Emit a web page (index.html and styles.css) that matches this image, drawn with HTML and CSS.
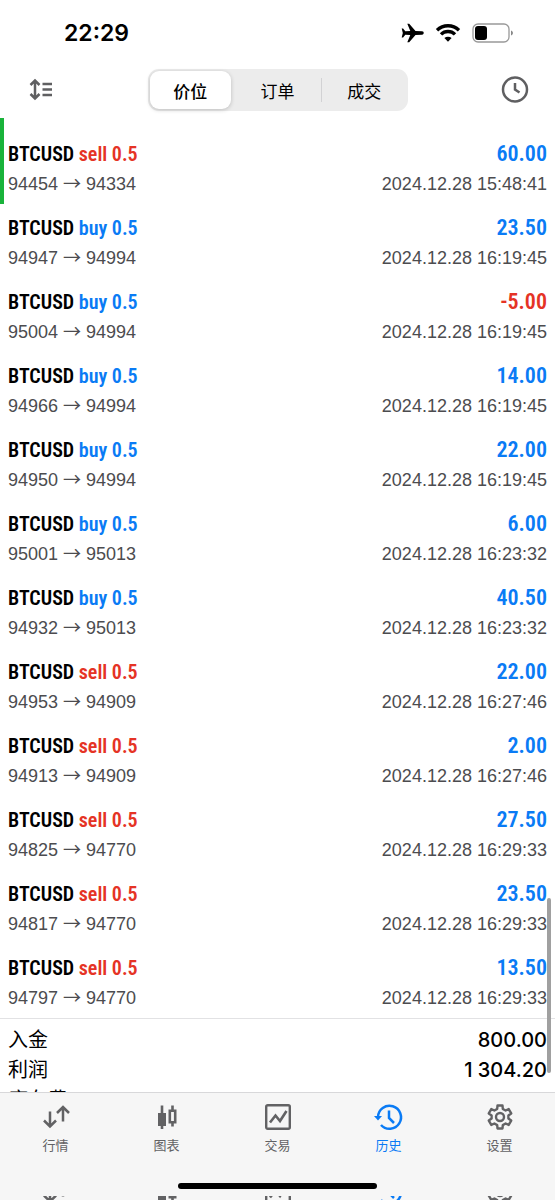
FILE: index.html
```
<!DOCTYPE html>
<html lang="zh-CN">
<head>
    <meta charset="UTF-8">
    <meta name="viewport" content="width=device-width, initial-scale=1.0">
    <title>历史</title>
    <link rel="stylesheet" href="styles.css">
</head>
<body>
    <!-- Shared icons -->
    <svg class="sprite" aria-hidden="true">
        <symbol id="icon-quotes" viewBox="0 0 30 30">
            <path d="M9 9.500v15M3 18.500l6 6 6-6M22 19.500V5M16 11l6-6 6 6" fill="none" stroke="currentColor" stroke-width="2.500"/>
        </symbol>
        <symbol id="icon-chart" viewBox="0 0 30 30">
            <path d="M10 3.500v23.500M20.500 3.500v5M20.500 20v4.500" fill="none" stroke="currentColor" stroke-width="2.600"/>
            <path d="M6 11h8v13H6z" fill="currentColor"/>
            <path d="M17.800 8.700h5.400v11.600h-5.400z" fill="none" stroke="currentColor" stroke-width="2.600"/>
        </symbol>
        <symbol id="icon-trade" viewBox="0 0 30 30">
            <rect x="3.200" y="3.200" width="23.600" height="23.600" rx="1.500" fill="none" stroke="currentColor" stroke-width="2.400"/>
            <path d="M7 20.500l5.500-7 4.500 5.500 6.500-10" fill="none" stroke="currentColor" stroke-width="2.600"/>
        </symbol>
        <symbol id="icon-history" viewBox="0 0 30 30">
            <path d="M4 15A11.500 11.500 0 1 1 7 23" fill="none" stroke="currentColor" stroke-width="2.500"/>
            <path d="M0 14h8l-4 4.500z" fill="currentColor"/>
            <path d="M15 8.500V16l5 5" fill="none" stroke="currentColor" stroke-width="2.500"/>
        </symbol>
        <symbol id="icon-settings" viewBox="0 0 30 30">
            <path d="M12.200 6.900L12.500 3.500H17.500L17.800 6.900L20.600 8.500L23.700 7.100L26.200 11.400L23.400 13.400V16.600L26.200 18.600L23.700 22.900L20.600 21.500L17.800 23.100L17.500 26.500H12.500L12.200 23.100L9.400 21.500L6.300 22.900L3.800 18.600L6.600 16.600V13.400L3.800 11.400L6.300 7.100L9.400 8.500Z" fill="none" stroke="currentColor" stroke-width="2.400" stroke-linejoin="round"/>
            <circle cx="15" cy="15" r="4" fill="none" stroke="currentColor" stroke-width="2.400"/>
        </symbol>
    </svg>

    <div class="app">
        <div class="status-bar">
            <span class="time">22:29</span>
            <div class="status-icons">
                <svg width="23" height="22" viewBox="0 0 23 22" aria-hidden="true">
                    <path d="M21 9.300c1.400.2 1.700.8 1.700 1.700s-.3 1.500-1.700 1.700l-6.500.2-6.300 7.400H6.300l3-7.400-5-.2-2.200 2.700H.7L1.800 11 .7 6.600h1.400l2.200 2.700 5-.2-3-7.400h1.900l6.300 7.400z"/>
                </svg>
                <svg width="26" height="20" viewBox="0 0 26 20" aria-hidden="true">
                    <path d="M2 7.200a16 16 0 0 1 22 0M6 11.400a10 10 0 0 1 14 0" fill="none" stroke="#000" stroke-width="3.400"/>
                    <path d="M13 18.700l-3.600-3.600a5.200 5.200 0 0 1 7.200 0z"/>
                </svg>
                <svg width="42" height="20" viewBox="0 0 42 20" aria-hidden="true">
                    <rect x="1" y="1" width="36" height="18" rx="5" fill="none" stroke="#999" stroke-width="1.300"/>
                    <rect x="3" y="3" width="12" height="14" rx="3"/>
                    <path d="M39 7.500c2.600.8 2.600 4.200 0 5z" fill="#888"/>
                </svg>
            </div>
        </div>

        <header class="toolbar">
            <button class="icon-button" aria-label="排序">
                <svg width="26" height="24" viewBox="0 0 26 24" aria-hidden="true">
                    <path d="M7 3.500v16M2.500 7L7 2.500 11.500 7M2.500 16L7 20.500l4.500-4.500M14.500 6H24M14.500 11.500H24M14.500 17H24" fill="none" stroke="currentColor" stroke-width="2.500"/>
                </svg>
            </button>
            <div class="segmented">
                <button class="segment active">价位</button>
                <button class="segment">订单</button>
                <button class="segment divided">成交</button>
            </div>
            <button class="icon-button" aria-label="时间范围">
                <svg width="28" height="28" viewBox="0 0 28 28" aria-hidden="true">
                    <circle cx="14" cy="13.500" r="12" fill="none" stroke="currentColor" stroke-width="2.500"/>
                    <path d="M14 7V13.500l4.500 3" fill="none" stroke="currentColor" stroke-width="2.500"/>
                </svg>
            </button>
        </header>

        <main class="history">
            <ul class="deals">
                <li class="deal marked">
                    <div class="line"><span>BTCUSD <span class="sell">sell 0.5</span></span><span class="amount profit">60.00</span></div>
                    <div class="detail"><span>94454 <span class="arrow">→</span> 94334</span><time>2024.12.28 15:48:41</time></div>
                </li>
                <li class="deal">
                    <div class="line"><span>BTCUSD <span class="buy">buy 0.5</span></span><span class="amount profit">23.50</span></div>
                    <div class="detail"><span>94947 <span class="arrow">→</span> 94994</span><time>2024.12.28 16:19:45</time></div>
                </li>
                <li class="deal">
                    <div class="line"><span>BTCUSD <span class="buy">buy 0.5</span></span><span class="amount loss">-5.00</span></div>
                    <div class="detail"><span>95004 <span class="arrow">→</span> 94994</span><time>2024.12.28 16:19:45</time></div>
                </li>
                <li class="deal">
                    <div class="line"><span>BTCUSD <span class="buy">buy 0.5</span></span><span class="amount profit">14.00</span></div>
                    <div class="detail"><span>94966 <span class="arrow">→</span> 94994</span><time>2024.12.28 16:19:45</time></div>
                </li>
                <li class="deal">
                    <div class="line"><span>BTCUSD <span class="buy">buy 0.5</span></span><span class="amount profit">22.00</span></div>
                    <div class="detail"><span>94950 <span class="arrow">→</span> 94994</span><time>2024.12.28 16:19:45</time></div>
                </li>
                <li class="deal">
                    <div class="line"><span>BTCUSD <span class="buy">buy 0.5</span></span><span class="amount profit">6.00</span></div>
                    <div class="detail"><span>95001 <span class="arrow">→</span> 95013</span><time>2024.12.28 16:23:32</time></div>
                </li>
                <li class="deal">
                    <div class="line"><span>BTCUSD <span class="buy">buy 0.5</span></span><span class="amount profit">40.50</span></div>
                    <div class="detail"><span>94932 <span class="arrow">→</span> 95013</span><time>2024.12.28 16:23:32</time></div>
                </li>
                <li class="deal">
                    <div class="line"><span>BTCUSD <span class="sell">sell 0.5</span></span><span class="amount profit">22.00</span></div>
                    <div class="detail"><span>94953 <span class="arrow">→</span> 94909</span><time>2024.12.28 16:27:46</time></div>
                </li>
                <li class="deal">
                    <div class="line"><span>BTCUSD <span class="sell">sell 0.5</span></span><span class="amount profit">2.00</span></div>
                    <div class="detail"><span>94913 <span class="arrow">→</span> 94909</span><time>2024.12.28 16:27:46</time></div>
                </li>
                <li class="deal">
                    <div class="line"><span>BTCUSD <span class="sell">sell 0.5</span></span><span class="amount profit">27.50</span></div>
                    <div class="detail"><span>94825 <span class="arrow">→</span> 94770</span><time>2024.12.28 16:29:33</time></div>
                </li>
                <li class="deal">
                    <div class="line"><span>BTCUSD <span class="sell">sell 0.5</span></span><span class="amount profit">23.50</span></div>
                    <div class="detail"><span>94817 <span class="arrow">→</span> 94770</span><time>2024.12.28 16:29:33</time></div>
                </li>
                <li class="deal">
                    <div class="line"><span>BTCUSD <span class="sell">sell 0.5</span></span><span class="amount profit">13.50</span></div>
                    <div class="detail"><span>94797 <span class="arrow">→</span> 94770</span><time>2024.12.28 16:29:33</time></div>
                </li>
            </ul>
            <dl class="summary">
                <div class="total"><dt>入金</dt><dd>800.00</dd></div>
                <div class="total"><dt>利润</dt><dd>1 304.20</dd></div>
                <div class="total"><dt>库存费</dt><dd>0.00</dd></div>
            </dl>
            <div class="scroll-thumb"></div>
        </main>

        <footer class="bottom">
            <nav class="tabs">
                <a href="#quotes" class="tab"><svg class="tab-icon"><use href="#icon-quotes"/></svg>行情</a>
                <a href="#chart" class="tab"><svg class="tab-icon"><use href="#icon-chart"/></svg>图表</a>
                <a href="#trade" class="tab"><svg class="tab-icon"><use href="#icon-trade"/></svg>交易</a>
                <a href="#history" class="tab current"><svg class="tab-icon"><use href="#icon-history"/></svg>历史</a>
                <a href="#settings" class="tab"><svg class="tab-icon"><use href="#icon-settings"/></svg>设置</a>
            </nav>
            <div class="home-indicator"></div>
            <!-- Lower part of the icons, cut off at the screen edge -->
            <div class="edge" aria-hidden="true">
                <span class="tab"><svg class="tab-icon"><use href="#icon-quotes"/></svg></span>
                <span class="tab"><svg class="tab-icon"><use href="#icon-chart"/></svg></span>
                <span class="tab"><svg class="tab-icon"><use href="#icon-trade"/></svg></span>
                <span class="tab current"><svg class="tab-icon"><use href="#icon-history"/></svg></span>
                <span class="tab"><svg class="tab-icon"><use href="#icon-settings"/></svg></span>
            </div>
        </footer>
    </div>
</body>
</html>
```
FILE: styles.css
```
* {
    box-sizing: border-box;
}
body {
    font-family: "Liberation Sans", "Noto Sans CJK SC", sans-serif;
    margin: 0;
    background-color: #ffffff;
    color: #000000;
}
button {
    font: inherit;
    color: inherit;
    background: none;
    border: none;
    padding: 0;
}
.sprite {
    display: none;
}
.app {
    display: flex;
    flex-direction: column;
    height: 100vh;
    overflow: hidden;
}
.status-bar {
    display: flex;
    flex-shrink: 0;
    justify-content: space-between;
    align-items: center;
    height: 66px;
    padding: 0 41px 0 64px;
}
.time {
    font-family: Inter, sans-serif;
    font-size: 23px;
    font-weight: 600;
}
.status-icons {
    display: flex;
    align-items: center;
    gap: 11px;
}
.toolbar {
    display: flex;
    flex-shrink: 0;
    justify-content: space-between;
    align-items: center;
    height: 52px;
    padding: 0 26px 4px 28px;
}
.icon-button {
    display: flex;
    color: #5f5f61;
}
.segmented {
    display: grid;
    grid-template-columns: repeat(3, 1fr);
    width: 260px;
    height: 42px;
    border-radius: 11px;
    background-color: #ececec;
}
.segment {
    position: relative;
    font-size: 17px;
}
.segment.active {
    margin: 2px 3px 2px 2px;
    border-radius: 9px;
    background-color: #ffffff;
    font-weight: 500;
    box-shadow: 0 1px 4px rgba(0, 0, 0, 0.2);
}
.segment.divided::before {
    content: "";
    position: absolute;
    left: 0;
    top: 9px;
    bottom: 9px;
    width: 1px;
    background-color: #d2d2d4;
}
.history {
    position: relative;
    flex: 1;
    min-height: 0;
    overflow: hidden;
}
.deals {
    margin: 0;
    padding: 0;
    list-style: none;
}
.deal {
    padding: 9px 8px 5px;
}
.deal.marked {
    padding-top: 21px;
    padding-left: 4px;
    border-left: 4px solid #19b33a;
}
.line, .detail, .total {
    display: flex;
    justify-content: space-between;
    height: 30px;
    line-height: 30px;
}
.line {
    font-family: "Roboto Condensed", "Liberation Sans Narrow", sans-serif;
    font-size: 20px;
    font-weight: 600;
}
.amount {
    font-size: 22px;
}
.detail {
    font-size: 18px;
    color: #4c4c4f;
}
.arrow {
    font-family: "Noto Sans CJK SC", sans-serif;
    line-height: 1;
}
.buy, .profit {
    color: #0a7bf5;
}
.sell, .loss {
    color: #e53325;
}
.summary {
    margin: 0;
    padding: 6px 8px;
    border-top: 1px solid #e2e2e4;
    font-size: 20px;
}
.total dd {
    margin: 0;
    font-family: Inter, sans-serif;
    font-weight: 500;
}
.scroll-thumb {
    position: absolute;
    right: 4px;
    bottom: 19px;
    width: 4px;
    height: 175px;
    border-radius: 2px;
    background-color: #a0a0a0;
}
.bottom {
    display: flex;
    flex-direction: column;
    flex-shrink: 0;
    height: 108px;
    border-top: 1px solid #d8d8da;
    background-color: #f6f6f6;
}
.tabs, .edge {
    display: flex;
}
.tabs {
    flex: 1;
    padding-top: 9px;
}
.tab {
    display: flex;
    flex: 1;
    flex-direction: column;
    align-items: center;
    font-size: 13px;
    line-height: 28px;
    color: #626264;
    text-decoration: none;
}
.tab.current {
    color: #0a7bf5;
}
.tab-icon {
    flex-shrink: 0;
    width: 30px;
    height: 30px;
}
.home-indicator {
    align-self: center;
    width: 36%;
    height: 6px;
    margin-bottom: 7px;
    border-radius: 3px;
    background-color: #000000;
}
.edge {
    height: 4px;
    overflow: hidden;
}
.edge .tab-icon {
    margin-top: -19px;
}
```
